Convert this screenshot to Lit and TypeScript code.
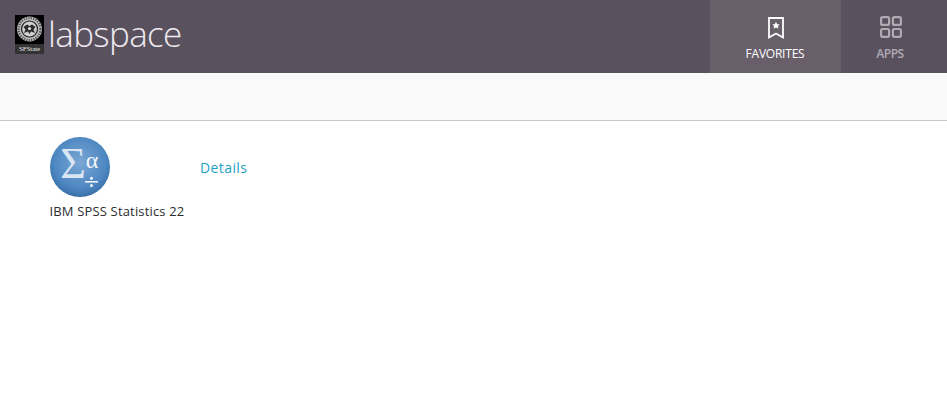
import { LitElement, html, css } from "lit";
import { customElement } from "lit/decorators.js";

@customElement("app-root")
export class AppRoot extends LitElement {
  static styles = css`
    :host { display: block; font-family: "Open Sans", "Noto Sans", sans-serif; background: #fff; min-height: 411px; }
    .header { height: 73px; background: #5a515e; display: flex; justify-content: space-between; }
    .brand { display: flex; align-items: flex-start; padding: 15px 0 0 15px; gap: 4px; }
    .logo { width: 29px; height: 39px; background: #000; display: flex; flex-direction: column; align-items: center; }
    .logo svg { display: block; }
    .logo .cap { flex: 1; width: 100%; background: #333; color: #eee; font-family: "Liberation Serif", serif; font-size: 7px; line-height: 10px; text-align: center; white-space: nowrap; letter-spacing: -0.1px; }
    .name { color: #eeeaf0; font-size: 35px; font-weight: 300; line-height: 38px; letter-spacing: -0.65px; }
    .tabs { display: flex; margin-right: 6px; }
    .tab { display: flex; flex-direction: column; align-items: center; padding-top: 16px; font-size: 12px; color: #b0aab3; box-sizing: border-box; height: 73px; }
    .tab svg { display: block; height: 24px; margin-bottom: 7px; }
    .tab.fav { width: 131px; background: #685f6b; color: #fff; }
    .tab.apps { width: 100px; }
    .tab span { letter-spacing: -0.3px; line-height: 14px; }
    .tab.fav span { margin-left: -1px; letter-spacing: -0.22px; }
    .tab.apps span { margin-left: -2px; font-weight: 600; letter-spacing: -0.5px; }
    .sub { height: 47px; background: #f9f9f9; border-bottom: 1px solid #c8c8c8; }
    .content { display: flex; padding: 16px 0 0 50px; }
    .app { width: 150px; font-size: 13px; color: #2c2c30; }
    .app svg { display: block; margin-bottom: 5px; }
    .app span { line-height: 18px; white-space: nowrap; letter-spacing: 0.16px; margin-left: -0.5px; }
    .details { color: #1f9fc4; font-size: 14px; line-height: 20px; margin-top: 21px; text-decoration: none; letter-spacing: 0.4px; }
  `;

  render() {
    return html`
      <div class="header">
        <div class="brand">
          <div class="logo">
            <svg width="29" height="29" viewBox="0 0 29 29">
              <circle cx="14.5" cy="14" r="12.5" fill="#bdbdbd" />
              <circle cx="14.5" cy="14" r="11" fill="none" stroke="#555" stroke-width="2.4" stroke-dasharray="1.2 1.2" />
              <circle cx="14.5" cy="14" r="8.6" fill="#1c1c1c" />
              <circle cx="14.5" cy="14" r="7.4" fill="#cfcfcf" />
              <path d="M8.5 12 L12 9.5 L14.5 11 L17 9.5 L20.5 12 L18.5 14.5 L20 18 L16 16.5 L14.5 19 L13 16.5 L9 18 L10.5 14.5 Z" fill="#2a2a2a" />
              <circle cx="14.5" cy="13.5" r="1.6" fill="#ddd" />
            </svg>
            <div class="cap">SFState</div>
          </div>
          <div class="name">labspace</div>
        </div>
        <div class="tabs">
          <div class="tab fav">
            <svg width="16" height="24" viewBox="0 0 16 24">
              <path d="M1 2 H15 V21.5 L8 17.5 L1 21.5 Z" fill="none" stroke="#fff" stroke-width="1.8" />
              <path d="M8 5.8 L9.2 8.2 L11.8 8.5 L9.9 10.3 L10.4 12.8 L8 11.6 L5.6 12.8 L6.1 10.3 L4.2 8.5 L6.8 8.2 Z" fill="#fff" />
            </svg>
            <span>FAVORITES</span>
          </div>
          <div class="tab apps">
            <svg width="22" height="24" viewBox="0 0 22 24">
              <g fill="none" stroke="#b0aab3" stroke-width="2.2">
                <rect x="1.1" y="1.1" width="8" height="7.8" rx="1.5" />
                <rect x="12.9" y="1.1" width="8" height="7.8" rx="1.5" />
                <rect x="1.1" y="13" width="8" height="7.8" rx="1.5" />
                <rect x="12.9" y="13" width="8" height="7.8" rx="1.5" />
              </g>
            </svg>
            <span>APPS</span>
          </div>
        </div>
      </div>
      <div class="sub"></div>
      <div class="content">
        <div class="app">
          <svg width="60" height="60" viewBox="0 0 60 60">
            <defs>
              <radialGradient id="b" cx="50%" cy="42%" r="58%">
                <stop offset="0" stop-color="#7ba8d4" />
                <stop offset="0.75" stop-color="#4d87c1" />
                <stop offset="1" stop-color="#3a70a8" />
              </radialGradient>
            </defs>
            <circle cx="30" cy="30" r="30" fill="url(#b)" />
            <text x="23" y="41" text-anchor="middle" font-family="Liberation Serif, serif" font-size="44" fill="#d8e5f2">Σ</text>
            <text x="42" y="31" text-anchor="middle" font-family="Liberation Serif, serif" font-size="24" fill="#f2f6fb">α</text>
            <g fill="#eef4fa">
              <rect x="35" y="44" width="13" height="1.6" />
              <circle cx="41.5" cy="41.2" r="1.5" />
              <circle cx="41.5" cy="48.4" r="1.5" />
            </g>
          </svg>
          <span>IBM SPSS Statistics 22</span>
        </div>
        <a class="details">Details</a>
      </div>
    `;
  }
}
